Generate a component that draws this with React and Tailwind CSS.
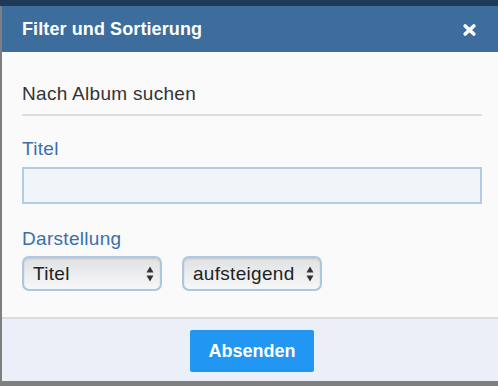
import React from "react";

function Arrows() {
  return (
    <svg width="8" height="16" viewBox="0 0 8 16" className="shrink-0">
      <path d="M4 0.5 L7.5 6.5 L0.5 6.5 Z" fill="#333" />
      <path d="M4 15.5 L7.5 9.5 L0.5 9.5 Z" fill="#333" />
    </svg>
  );
}

function FakeSelect({ label }) {
  return (
    <div className="w-[140px] h-[35px] rounded-[7px] border-2 border-[#abc7e2] bg-gradient-to-b from-[#dfe1e3] via-[#ebecee] to-[#f7f7f7] shadow-[inset_0_1px_2px_rgba(0,0,0,0.12)] flex items-center justify-between pl-[9px] pr-[6px] text-[19px] leading-[22px] text-[#222] tracking-[0.3px]">
      <span>{label}</span>
      <Arrows />
    </div>
  );
}

export default function App() {
  return (
    <div
      className="w-[498px] h-[386px] bg-[#7f7f7f] flex flex-col overflow-hidden"
      style={{ fontFamily: '"Liberation Sans", Arial, sans-serif' }}
    >
      <div className="h-[6px] bg-[#1f3a58] shrink-0" />
      <div className="flex flex-1">
        <div className="w-[2px] shrink-0" />
        <div className="flex-1 flex flex-col">
          <div className="h-[46px] bg-[#3c6d9c] flex items-center justify-between pl-[20px] pr-[22px]">
            <span className="text-white font-semibold text-[18px] leading-[22px] tracking-[0.1px]">Filter und Sortierung</span>
            <svg width="13" height="12" viewBox="0 0 13 12" className="mt-[2px]">
              <path d="M2.2 2 L10.8 10 M10.8 2 L2.2 10" stroke="#fff" strokeWidth="3.6" strokeLinecap="round" />
            </svg>
          </div>
          <div className="flex-1 bg-[#fafafa] pl-[20px] pr-[16px] pt-[31px] flex flex-col">
            <div className="text-[19px] leading-[22px] text-[#333] tracking-[0.3px]">Nach Album suchen</div>
            <div className="mt-[9px] h-[2px] bg-[#dddddd]" />
            <div className="mt-[22px] text-[19px] leading-[22px] text-[#3b6fab] tracking-[0.3px]">Titel</div>
            <div className="mt-[7px] h-[37px] border-2 border-[#b3cce3] bg-[#f0f5fa]" />
            <div className="mt-[24px] text-[19px] leading-[22px] text-[#3b6fab] tracking-[0.3px]">Darstellung</div>
            <div className="mt-[6px] flex gap-[20px]">
              <FakeSelect label="Titel" />
              <FakeSelect label="aufsteigend" />
            </div>
          </div>
          <div className="h-[2px] bg-[#dcdcdc]" />
          <div className="h-[62px] bg-[#ebeff8] flex items-start justify-center pt-[11px]">
            <div className="w-[124px] h-[42px] bg-[#2196f3] rounded-[2px] flex items-center justify-center text-white font-bold text-[18px] leading-[22px] ml-[4px]">
              Absenden
            </div>
          </div>
        </div>
      </div>
      <div className="h-[5px] shrink-0" />
    </div>
  );
}
